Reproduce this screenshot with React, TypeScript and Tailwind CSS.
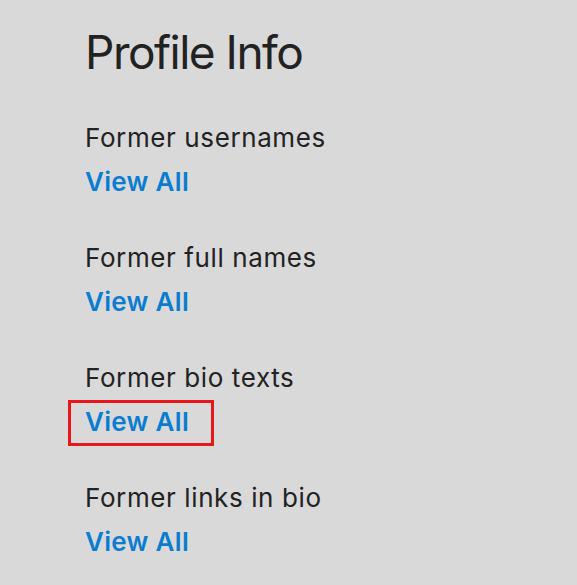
const sections = [
  { label: "Former usernames", marked: false },
  { label: "Former full names", marked: false },
  { label: "Former bio texts", marked: true },
  { label: "Former links in bio", marked: false },
];

export default function App() {
  return (
    <div className="min-h-[585px] w-[577px] bg-[#d9d9d9] pl-[85px] pt-[24px] font-['Inter','Liberation_Sans',sans-serif] text-[#222222]">
      <h1 className="text-[46px] leading-[56px] font-normal tracking-[-1.5px]">Profile Info</h1>
      <div className="mt-[36px] flex flex-col gap-[32px]">
        {sections.map((s) => (
          <div key={s.label} className="flex flex-col">
            <div className="text-[26px] leading-[44px] tracking-[0.6px]">{s.label}</div>
            <div className="relative h-[44px]">
              <a href="#" className="text-[26px] leading-[44px] font-semibold tracking-[0.3px] text-[#0a7dd1]">
                View All
              </a>
              {s.marked && (
                <span className="absolute left-[-17px] top-0 h-[46px] w-[146px] border-[3px] border-[#e8161b]" />
              )}
            </div>
          </div>
        ))}
      </div>
    </div>
  );
}
